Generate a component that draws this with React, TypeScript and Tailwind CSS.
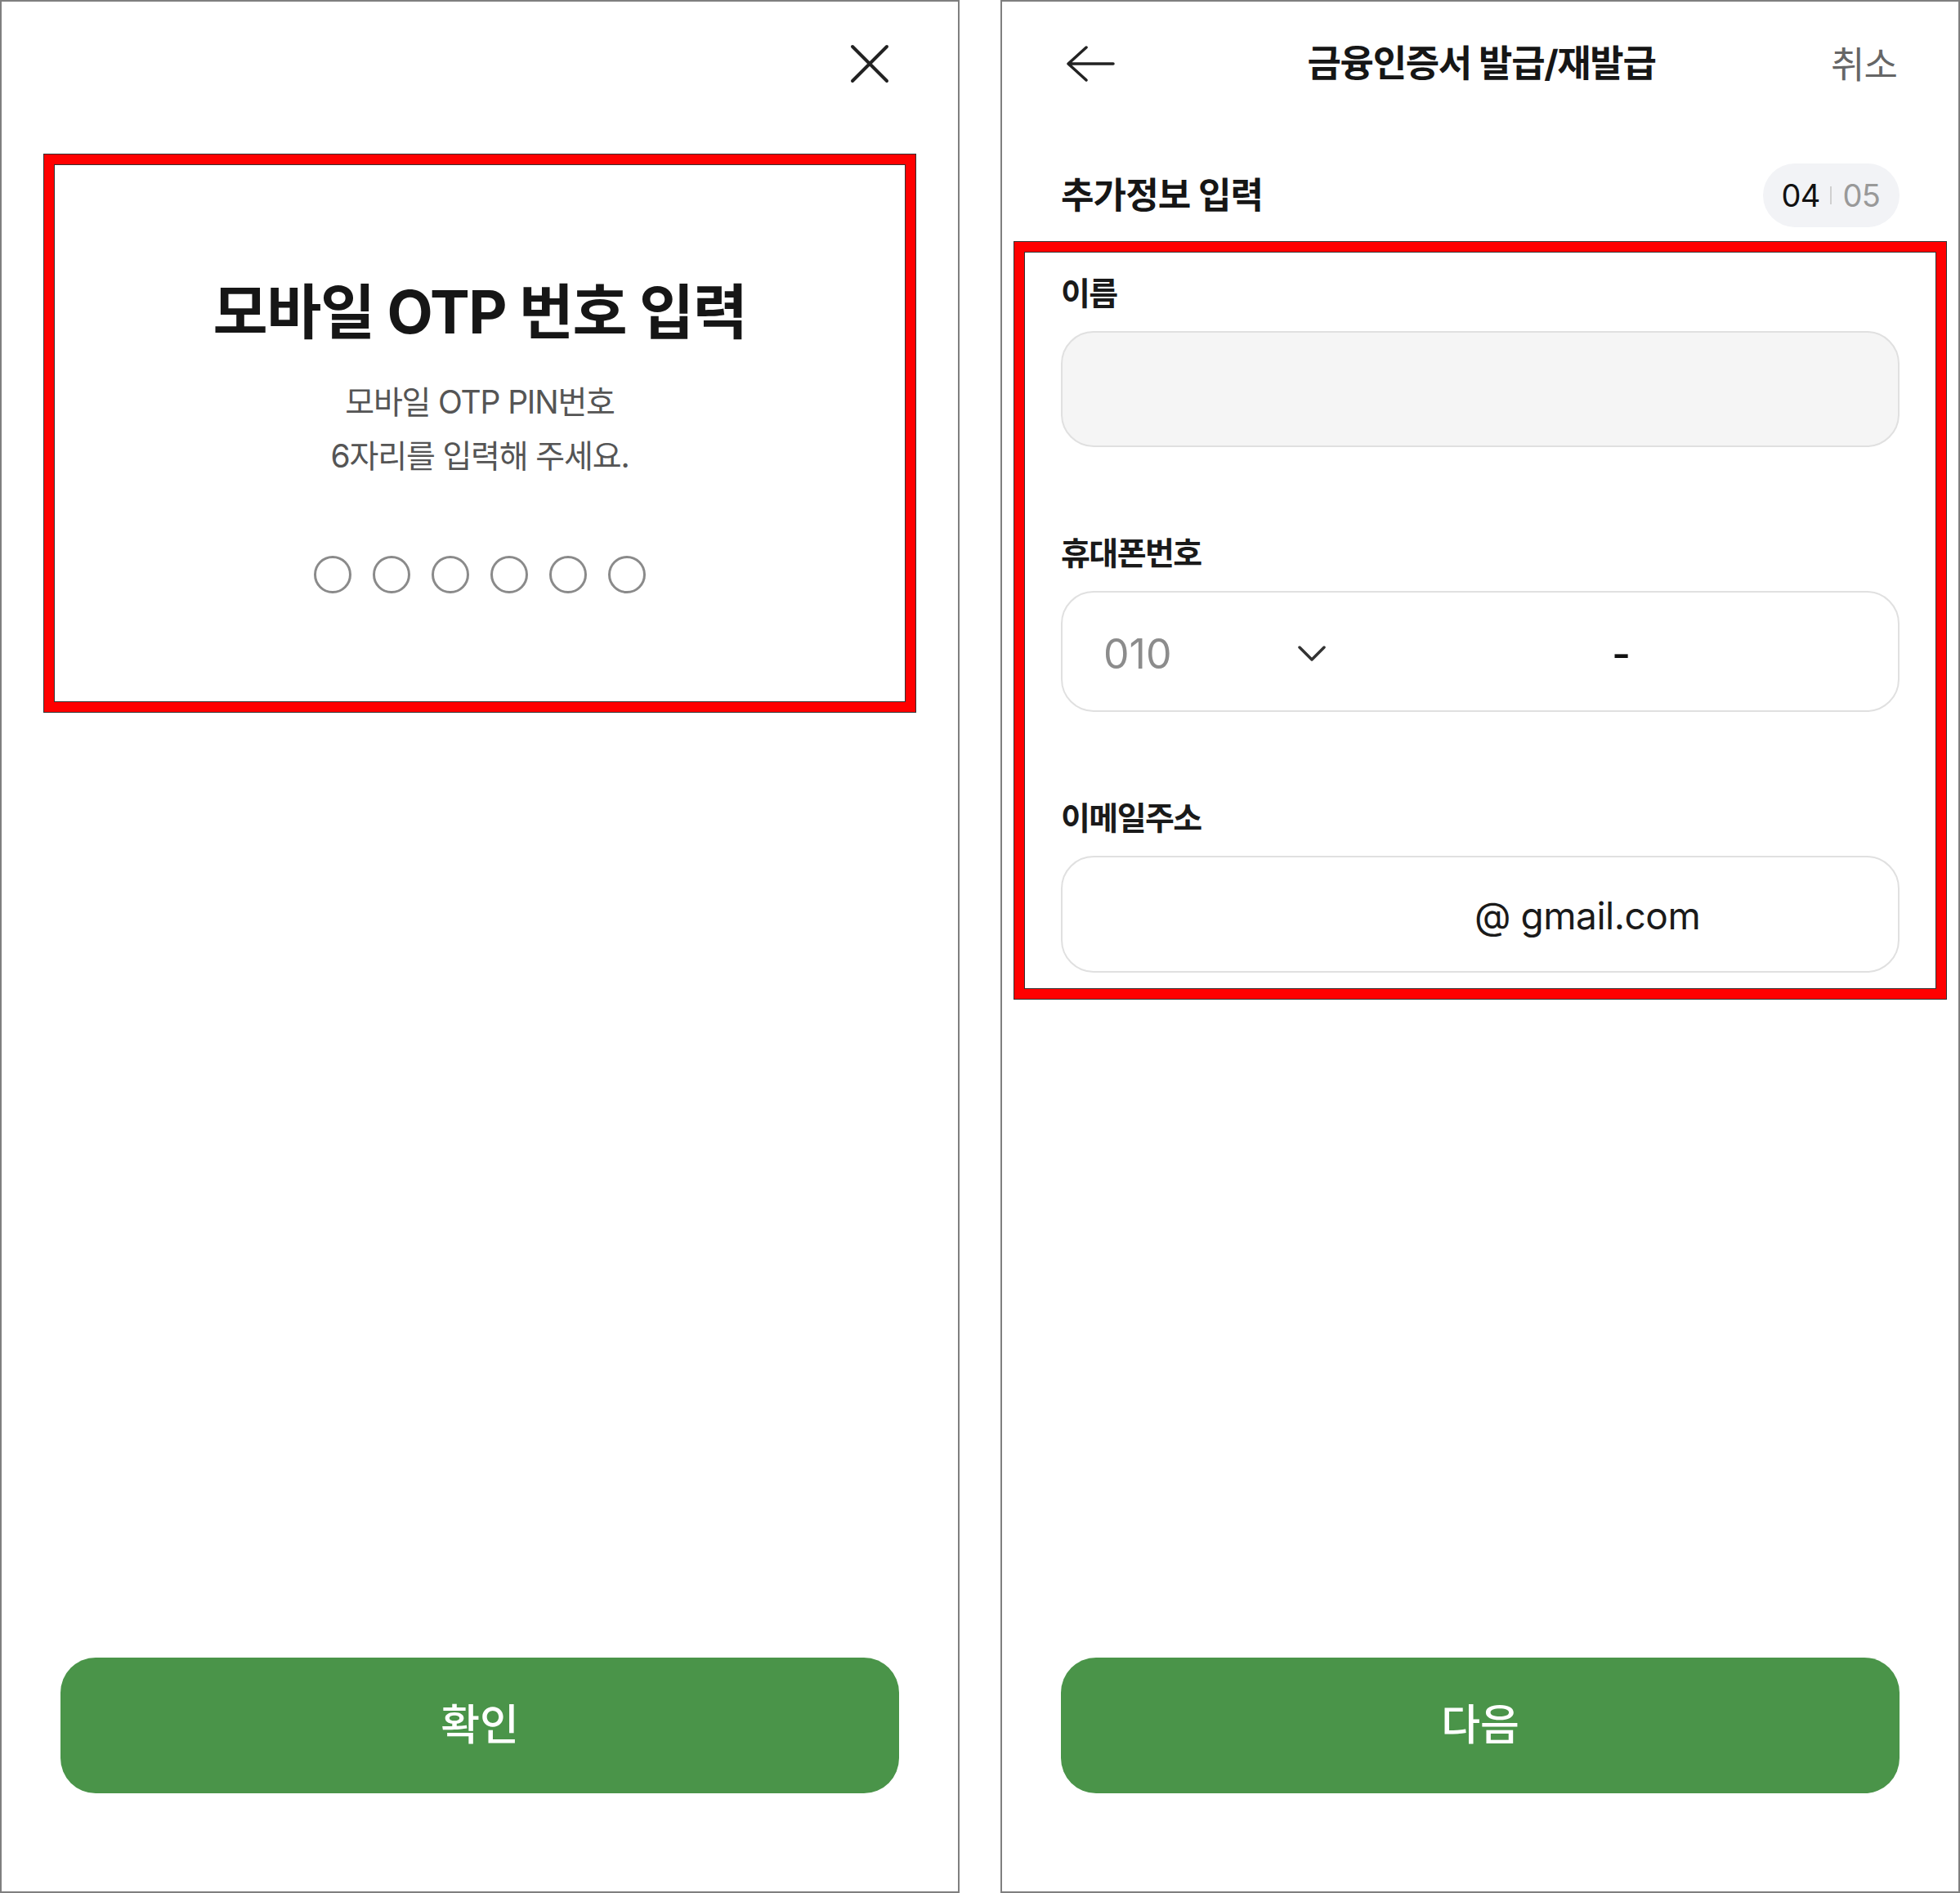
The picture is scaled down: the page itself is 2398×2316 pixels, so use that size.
import React from "react";

const FONT = { fontFamily: 'Inter, "Noto Sans CJK KR", "Noto Sans", sans-serif' };

function CloseIcon() {
  return (
    <svg width="48" height="48" viewBox="0 0 48 48" fill="none">
      <path d="M3 3 L45 45 M45 3 L3 45" stroke="#222" strokeWidth="4" strokeLinecap="round" />
    </svg>
  );
}

function BackArrow() {
  return (
    <svg width="60" height="44" viewBox="0 0 60 44" fill="none">
      <path d="M58 22 H3 M25 2 L3 22 L25 42" stroke="#222" strokeWidth="3.5" strokeLinecap="round" strokeLinejoin="round" />
    </svg>
  );
}

function Chevron() {
  return (
    <svg width="34" height="20" viewBox="0 0 34 20" fill="none">
      <path d="M2 2 L17 17 L32 2" stroke="#333" strokeWidth="3.5" strokeLinecap="round" strokeLinejoin="round" />
    </svg>
  );
}

function LeftPanel() {
  return (
    <div className="w-[1174px] h-[2316px] border-2 border-[#7f7f7f] flex flex-col bg-white shrink-0">
      <div className="h-[186px] flex justify-end pt-[52px] pr-[84px]">
        <CloseIcon />
      </div>
      <div className="ml-[51px] w-[1068px] h-[684px] border border-[#333] bg-[#ff0000] p-[12px]">
        <div className="w-full h-full border border-[#333] bg-white flex flex-col items-center pt-[138px]">
          <div className="text-[73px] leading-[84px] font-bold text-[#161616] tracking-[-0.02em]">
            모바일 OTP 번호 입력
          </div>
          <div className="mt-[35px] text-[39px] leading-[66px] text-[#555] text-center tracking-[-0.03em]">
            <div>모바일 OTP PIN번호</div>
            <div>6자리를 입력해 주세요.</div>
          </div>
          <div className="mt-[89px] flex gap-[26px]">
            {[0, 1, 2, 3, 4, 5].map((i) => (
              <div key={i} className="w-[46px] h-[46px] rounded-full border-[3px] border-[#8a8a8a]" />
            ))}
          </div>
        </div>
      </div>
      <button className="mt-auto mb-[120px] mx-[72px] h-[166px] rounded-[43px] bg-[#4a9449] text-white text-[52px] font-medium">
        확인
      </button>
    </div>
  );
}

function Label({ children }: { children: React.ReactNode }) {
  return (
    <div className="text-[39px] leading-[50px] font-bold text-[#1a1a1a] tracking-[-0.04em]">{children}</div>
  );
}

function RightPanel() {
  return (
    <div className="w-[1174px] h-[2316px] border-2 border-[#7f7f7f] flex flex-col bg-white shrink-0">
      <div className="h-[152px] grid grid-cols-[1fr_auto_1fr] items-center pl-[78px] pr-[75px]">
        <div className="flex items-center">
          <BackArrow />
        </div>
        <div className="text-[45px] font-bold text-[#161616] tracking-[-0.03em]">금융인증서 발급/재발급</div>
        <div className="flex justify-end pt-[4px] text-[45px] text-[#666] tracking-[-0.02em]">취소</div>
      </div>
      <div className="mt-[46px] h-[78px] px-[72px] flex items-center justify-between">
        <div className="text-[44px] font-bold text-[#161616] tracking-[-0.02em]">추가정보 입력</div>
        <div className="h-[78px] rounded-full bg-[#f2f3f6] flex items-center pl-[22px] pr-[24px] text-[38px] tracking-[-0.02em]">
          <span className="text-[#111]">04</span>
          <span className="mx-[13px] w-[2px] h-[22px] bg-[#d0d0d0]" />
          <span className="text-[#999]">05</span>
        </div>
      </div>
      <div className="mt-[17px] mx-[14px] border border-[#333] bg-[#ff0000] p-[12px]">
        <div className="border border-[#333] bg-white px-[44px] pt-[25px] pb-[19px] flex flex-col">
          <Label>이름</Label>
          <div className="mt-[21px] h-[142px] rounded-[40px] border-2 border-[#e0e0e0] bg-[#f5f5f5]" />
          <div className="mt-[105px]">
            <Label>휴대폰번호</Label>
          </div>
          <div className="mt-[21px] h-[148px] rounded-[40px] border-2 border-[#e0e0e0] bg-white flex items-center pl-[50px] pt-[5px]">
            <span className="w-[84px] text-[50px] text-[#8c8c8c] leading-none">010</span>
            <span className="ml-[154px] flex items-center">
              <Chevron />
            </span>
            <span className="ml-[350px] text-[50px] font-medium text-[#111] leading-none">-</span>
          </div>
          <div className="mt-[105px]">
            <Label>이메일주소</Label>
          </div>
          <div className="mt-[21px] h-[143px] rounded-[40px] border-2 border-[#e0e0e0] bg-white flex items-center pl-[504px] pt-[2px]">
            <span className="text-[46px] text-[#1a1a1a] leading-none tracking-[-0.01em]">@ gmail.com</span>
          </div>
        </div>
      </div>
      <button className="mt-auto mb-[120px] mx-[72px] h-[166px] rounded-[43px] bg-[#4a9449] text-white text-[52px] font-medium">
        다음
      </button>
    </div>
  );
}

export default function App() {
  return (
    <div className="w-[2398px] h-[2316px] bg-white flex gap-[50px]" style={FONT}>
      <LeftPanel />
      <RightPanel />
    </div>
  );
}
